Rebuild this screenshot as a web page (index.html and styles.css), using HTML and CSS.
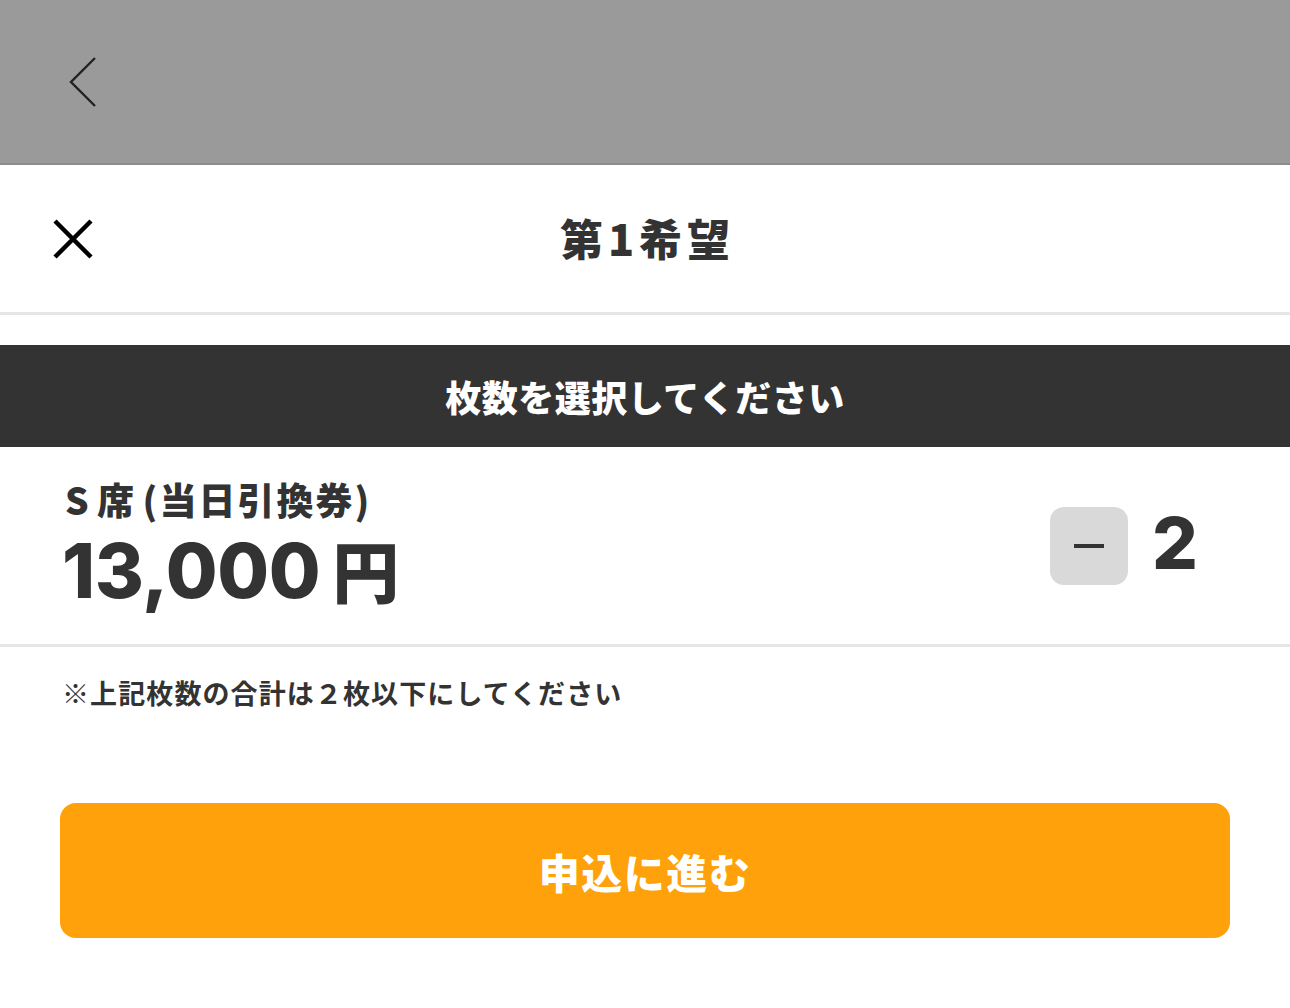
FILE: index.html
```html
<!DOCTYPE html>
<html lang="ja">
<head>
    <meta charset="UTF-8">
    <meta name="viewport" content="width=device-width, initial-scale=1.0">
    <title>第1希望</title>
    <link rel="stylesheet" href="styles.css">
</head>
<body>
    <div class="backdrop">
        <a href="#" class="back-link" aria-label="戻る">
            <svg width="30" height="52" viewBox="0 0 30 52"><path d="M28 2 L4 26 L28 50" fill="none" stroke="#222" stroke-width="2.4"/></svg>
        </a>
    </div>

    <div class="sheet">
        <header class="sheet-header">
            <button class="close-btn" aria-label="閉じる">
                <svg width="40" height="40" viewBox="0 0 40 40"><path d="M2 2 L38 38 M38 2 L2 38" stroke="#000" stroke-width="4.5"/></svg>
            </button>
            <h1>第1希望</h1>
        </header>

        <div class="section-title">枚数を選択してください</div>

        <div class="ticket-row">
            <div class="ticket-info">
                <div class="ticket-name">S 席 (当日引換券)</div>
                <div class="ticket-price"><span class="num">13,000</span><span class="yen">円</span></div>
            </div>
            <div class="counter">
                <button class="minus-btn" aria-label="減らす"><span></span></button>
                <span class="count">2</span>
            </div>
        </div>

        <p class="note">※上記枚数の合計は２枚以下にしてください</p>

        <div class="actions">
            <button class="submit-btn">申込に進む</button>
        </div>
    </div>
</body>
</html>
```

FILE: styles.css
```css
* { margin: 0; padding: 0; box-sizing: border-box; }
body {
    font-family: "Noto Sans CJK JP", "Noto Sans", sans-serif;
    background: white;
    color: #333;
}
.backdrop {
    height: 165px;
    background: #9a9a9a;
    border-bottom: 2px solid #8c8c8c;
    padding: 56px 0 0 67px;
}
.back-link {
    display: inline-block;
}
.sheet {
    background: white;
}
.sheet-header {
    height: 150px;
    display: flex;
    align-items: center;
    justify-content: center;
    position: relative;
    border-bottom: 3px solid #e6e6e6;
}
.close-btn {
    position: absolute;
    left: 53px;
    top: 54px;
    background: none;
    border: none;
    cursor: pointer;
}
.sheet-header h1 {
    font-size: 43px;
    font-weight: 900;
    color: #333;
    margin-top: -4px;
    letter-spacing: 5px;
    padding-left: 5px;
}
.section-title {
    margin-top: 30px;
    height: 102px;
    background: #333;
    color: white;
    font-size: 36px;
    font-weight: 900;
    display: flex;
    align-items: center;
    justify-content: center;
    letter-spacing: 0.5px;
}
.ticket-row {
    display: flex;
    justify-content: space-between;
    align-items: center;
    padding: 26px 92px 31px 62px;
    border-bottom: 3px solid #e6e6e6;
}
.ticket-name {
    font-size: 37px;
    font-weight: 900;
    line-height: 52px;
    padding-left: 3px;
    letter-spacing: 2px;
    word-spacing: -4px;
}
.ticket-price {
    display: flex;
    align-items: baseline;
    gap: 12px;
    line-height: 84px;
    margin-top: 2px;
    font-weight: 900;
}
.ticket-price .num {
    font-family: Inter, "Noto Sans CJK JP", sans-serif;
    font-size: 75px;
    font-weight: 800;
    letter-spacing: -0.4px;
}
.ticket-price .yen {
    font-size: 67px;
}
.counter {
    display: flex;
    align-items: center;
    gap: 24px;
    margin-top: 6px;
}
.minus-btn {
    width: 78px;
    height: 78px;
    border-radius: 14px;
    background: #d9d9d9;
    border: none;
    display: flex;
    align-items: center;
    justify-content: center;
    cursor: pointer;
}
.minus-btn span {
    width: 30px;
    height: 4px;
    background: #333;
}
.count {
    font-family: Inter, "Noto Sans CJK JP", sans-serif;
    font-size: 72px;
    font-weight: 800;
    line-height: 1;
    margin-top: -6px;
}
.note {
    font-size: 27px;
    font-weight: 700;
    padding: 26px 0 0 62px;
    line-height: 40px;
    letter-spacing: 1.1px;
}
.actions {
    padding: 90px 60px 0;
}
.submit-btn {
    width: 100%;
    height: 135px;
    background: #fea10a;
    border: none;
    border-radius: 16px;
    color: white;
    font-family: "Noto Sans CJK JP", sans-serif;
    font-size: 41px;
    font-weight: 900;
    letter-spacing: 1.5px;
    cursor: pointer;
}
```
